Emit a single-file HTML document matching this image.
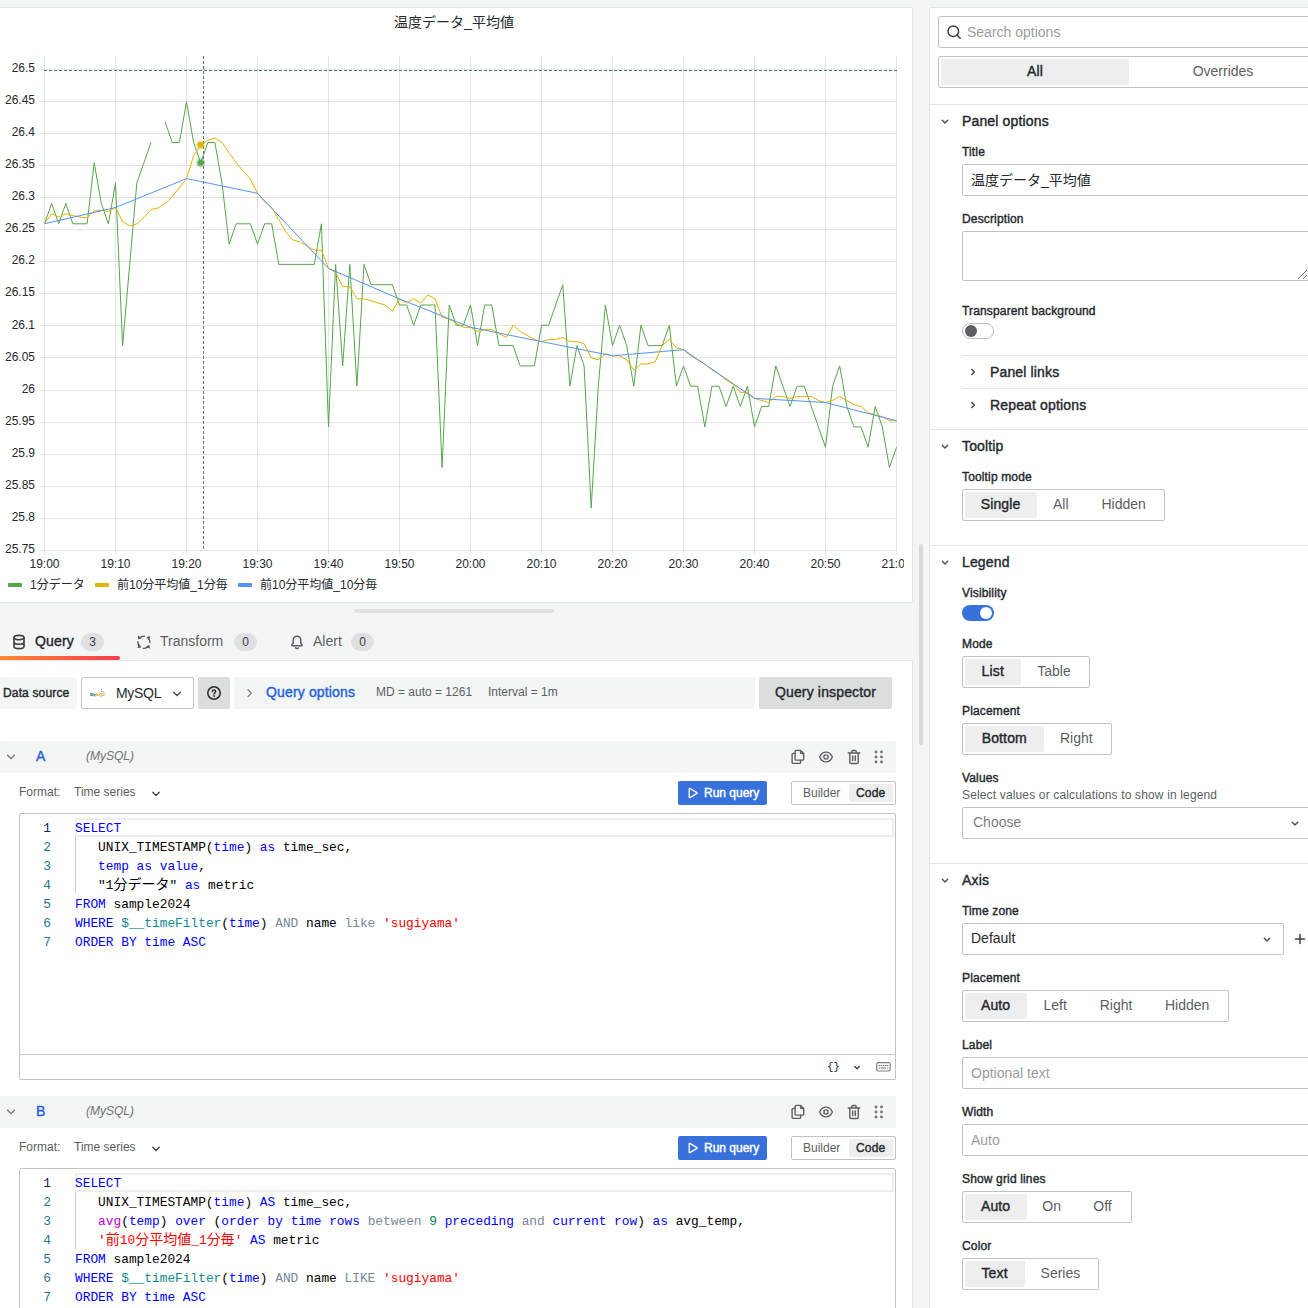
<!DOCTYPE html>
<html lang="ja"><head><meta charset="utf-8"><title>Edit panel</title>
<style>
*{box-sizing:border-box}
html,body{margin:0;padding:0}
body{width:1308px;height:1308px;overflow:hidden;position:relative;background:#f4f5f5;color:#24292e;
 font-family:"Liberation Sans","Noto Sans CJK JP",sans-serif;font-size:14px;line-height:1}
.abs{position:absolute}
.panel{position:absolute;background:#fff;border:1px solid #e4e5e6;border-radius:2px}
svg{display:block}
svg text{font-family:"Liberation Sans","Noto Sans CJK JP",sans-serif}
.t{position:absolute;white-space:nowrap;line-height:16px;height:16px}
.b5{font-weight:normal;-webkit-text-stroke:0.4px currentColor;letter-spacing:0.15px}
.ic{position:absolute;fill:none;stroke:#3b3f43;stroke-width:1.6;stroke-linecap:round;stroke-linejoin:round}
.badge{position:absolute;height:18px;border-radius:9px;background:#dfe0e1;color:#3b3f43;font-size:12px;line-height:18px;text-align:center}
.qh{position:absolute;left:0;width:896px;height:32px;background:#f4f5f5;border-radius:2px}
.code{position:absolute;font-family:"Liberation Mono","Noto Sans CJK JP",monospace;font-size:12.83px;line-height:19px;white-space:pre;color:#000}
.code .k{color:#0000ff}.code .s{color:#ff0000}.code .m{color:#0e8a8f}.code .o{color:#778899}.code .n{color:#098658}.code .f{color:#c700c7}
.ln{position:absolute;font-family:"Liberation Mono",monospace;font-size:12.83px;line-height:19px;white-space:pre;color:#237893;text-align:right;width:16px}
.h14{letter-spacing:-0.1px}
.cj{font-size:14px;line-height:19px}

</style></head>
<body>
<div class="panel" style="left:-2px;top:7px;width:915px;height:596px;overflow:hidden">
  <div class="t" style="left:1px;width:908px;top:6px;text-align:center;font-size:14px;">温度データ_平均値</div>
  <div class="abs" style="left:1px;top:0;width:904px;height:594px;overflow:hidden"><svg class="chart" width="912" height="594" viewBox="0 8 912 594">
<path d="M44.5 56.5 V555 M115.5 56.5 V555 M186.5 56.5 V555 M257.5 56.5 V555 M328.5 56.5 V555 M399.5 56.5 V555 M470.5 56.5 V555 M541.5 56.5 V555 M612.5 56.5 V555 M683.5 56.5 V555 M754.5 56.5 V555 M825.5 56.5 V555 M896.5 56.5 V555 M40 69.5 H896.5 M40 101.5 H896.5 M40 133.5 H896.5 M40 165.5 H896.5 M40 197.5 H896.5 M40 229.5 H896.5 M40 261.5 H896.5 M40 293.5 H896.5 M40 325.5 H896.5 M40 357.5 H896.5 M40 390.5 H896.5 M40 422.5 H896.5 M40 454.5 H896.5 M40 486.5 H896.5 M40 518.5 H896.5 M40 550.5 H896.5" stroke="#24292e" stroke-opacity="0.12" stroke-width="1" fill="none" shape-rendering="auto"/>
<g font-size="12" fill="#24292e" text-anchor="end">
<text x="35" y="71.9">26.5</text>
<text x="35" y="104">26.45</text>
<text x="35" y="136.1">26.4</text>
<text x="35" y="168.2">26.35</text>
<text x="35" y="200.2">26.3</text>
<text x="35" y="232.3">26.25</text>
<text x="35" y="264.4">26.2</text>
<text x="35" y="296.4">26.15</text>
<text x="35" y="328.5">26.1</text>
<text x="35" y="360.6">26.05</text>
<text x="35" y="392.6">26</text>
<text x="35" y="424.7">25.95</text>
<text x="35" y="456.8">25.9</text>
<text x="35" y="488.9">25.85</text>
<text x="35" y="520.9">25.8</text>
<text x="35" y="553">25.75</text>
</g>
<g font-size="12" fill="#24292e" text-anchor="middle">
<text x="44.5" y="568">19:00</text>
<text x="115.5" y="568">19:10</text>
<text x="186.5" y="568">19:20</text>
<text x="257.5" y="568">19:30</text>
<text x="328.5" y="568">19:40</text>
<text x="399.5" y="568">19:50</text>
<text x="470.5" y="568">20:00</text>
<text x="541.5" y="568">20:10</text>
<text x="612.5" y="568">20:20</text>
<text x="683.5" y="568">20:30</text>
<text x="754.5" y="568">20:40</text>
<text x="825.5" y="568">20:50</text>
<text x="896.5" y="568">21:00</text>
</g>
<path d="M44.5 223.8 L51.6 203.4 L58.7 223.8 L65.8 203.4 L72.9 223.8 L80 223.8 L87.1 223.8 L94.2 162.8 L101.3 203.4 L108.4 223.8 L115.5 183.1 L122.6 345.6 L129.7 264.4 L136.8 183.1 L143.9 162.8 L151 142.5 M165.2 122.2 L172.3 142.5 L179.4 142.5 L186.5 101.9 L193.6 142.5 L200.7 162.8 L207.8 142.5 L214.9 142.5 L222 183.1 L229.1 244.1 L236.2 223.8 L243.3 223.8 L250.4 223.8 L257.5 244.1 L264.6 223.8 L271.7 223.8 L278.8 264.4 L285.9 264.4 L293 264.4 L300.1 264.4 L307.2 264.4 L314.3 264.4 L321.4 223.8 L328.5 426.9 L335.6 264.4 L342.7 365.9 L349.8 264.4 L356.9 386.2 L364 264.4 L371.1 284.7 L378.2 284.7 L385.3 284.7 L392.4 284.7 L399.5 305 L406.6 305 L413.7 325.3 L420.8 305 L427.9 305 L435 305 L442.1 467.5 L449.2 305 L456.3 325.3 L463.4 325.3 L470.5 305 L477.6 345.6 L484.7 305 L491.8 305 L498.9 345.6 L506 345.6 L513.1 345.6 L520.2 365.9 L527.3 365.9 L534.4 365.9 L541.5 325.3 L548.6 325.3 L555.7 305 L562.8 284.7 L569.9 386.2 L577 345.6 L584.1 365.9 L591.2 508.1 L598.3 386.2 L605.4 305 L612.5 345.6 L619.6 325.3 L626.7 345.6 L633.8 386.2 L640.9 325.3 L648 345.6 L655.1 345.6 L662.2 345.6 L669.3 325.3 L676.4 386.2 L683.5 365.9 L690.6 386.2 L697.7 386.2 L704.8 426.9 L711.9 386.2 L719 386.2 L726.1 406.5 L733.2 386.2 L740.3 406.5 L747.4 386.2 L754.5 426.9 L761.6 406.5 L768.7 406.5 L775.8 365.9 L782.9 386.2 L790 406.5 L797.1 386.2 L804.2 386.2 L811.3 406.5 L818.4 426.9 L825.5 447.2 L832.6 386.2 L839.7 365.9 L846.8 406.5 L853.9 426.9 L861 426.9 L868.1 447.2 L875.2 406.5 L882.3 426.9 L889.4 467.5 L896.5 447.2" stroke="#56a64b" stroke-width="1" fill="none" stroke-linejoin="round"/>
<path d="M44.5 223.8 L51.6 213.6 L58.7 217 L65.8 213.6 L72.9 215.6 L80 217 L87.1 218 L94.2 211.1 L101.3 210.2 L108.4 211.6 L115.5 207.5 L122.6 221.7 L129.7 225.8 L136.8 223.8 L143.9 217.7 L151 209.5 L158.1 208 L165.2 203.4 L172.3 196.7 L179.4 187.7 L186.5 178.6 L193.6 156.1 L200.7 144.8 L207.8 140.3 L214.9 138 L222 142.5 L229.1 152.7 L236.2 162.8 L243.3 171 L250.4 179.1 L257.5 193.3 L264.6 201.4 L271.7 207.5 L278.8 219.7 L285.9 231.9 L293 240 L300.1 242 L307.2 246.1 L314.3 250.2 L321.4 250.2 L328.5 268.4 L335.6 272.5 L342.7 286.7 L349.8 286.7 L356.9 298.9 L364 298.9 L371.1 300.9 L378.2 303 L385.3 305 L392.4 311.1 L399.5 298.9 L406.6 303 L413.7 298.9 L420.8 303 L427.9 294.8 L435 298.9 L442.1 317.2 L449.2 319.2 L456.3 323.3 L463.4 327.3 L470.5 327.3 L477.6 331.4 L484.7 329.4 L491.8 329.4 L498.9 333.4 L506 337.5 L513.1 325.3 L520.2 331.4 L527.3 335.5 L534.4 339.5 L541.5 341.6 L548.6 339.5 L555.7 339.5 L562.8 337.5 L569.9 341.6 L577 341.6 L584.1 343.6 L591.2 357.8 L598.3 359.8 L605.4 353.7 L612.5 355.8 L619.6 355.8 L626.7 359.8 L633.8 370 L640.9 363.9 L648 363.9 L655.1 361.9 L662.2 345.6 L669.3 339.5 L676.4 347.7 L683.5 349.7 L690.6 355.8 L697.7 359.8 L704.8 363.9 L711.9 370 L719 374.1 L726.1 380.1 L733.2 384.2 L740.3 392.3 L747.4 392.3 L754.5 398.4 L761.6 400.5 L768.7 402.5 L775.8 396.4 L782.9 396.4 L790 398.4 L797.1 396.4 L804.2 396.4 L811.3 396.4 L818.4 400.5 L825.5 402.5 L832.6 400.5 L839.7 396.4 L846.8 400.5 L853.9 404.5 L861 406.5 L868.1 412.6 L875.2 414.7 L882.3 416.7 L889.4 420.8 L896.5 420.8" stroke="#e0b400" stroke-width="1" fill="none" stroke-linejoin="round"/>
<path d="M44.5 223.8 L115.5 207.5 L186.5 178.6 L257.5 193.3 L328.5 268.4 L399.5 298.9 L470.5 327.3 L541.5 341.6 L612.5 355.8 L683.5 349.7 L754.5 398.4 L825.5 402.5 L896.5 420.8" stroke="#5794f2" stroke-width="1" fill="none" stroke-linejoin="round"/>
<path d="M203.5 56 V551" stroke="#587589" stroke-width="1" stroke-dasharray="3 2" fill="none" shape-rendering="crispEdges"/>
<path d="M43.9 70.5 H896.5" stroke="#587589" stroke-width="1" stroke-dasharray="3 2" fill="none" shape-rendering="crispEdges"/>
<circle cx="200.6" cy="144.8" r="4.5" fill="#e0b400" fill-opacity="0.45"/><circle cx="200.6" cy="144.8" r="2.8" fill="#e0b400"/>
<circle cx="200.6" cy="162.8" r="4.5" fill="#56a64b" fill-opacity="0.45"/><circle cx="200.6" cy="162.8" r="2.8" fill="#56a64b"/>
</svg></div>
  <div class="abs" style="left:9px;top:574.5px;width:14px;height:4px;background:#56a64b;border-radius:1px"></div>
  <div class="t" style="left:31px;top:568.5px;font-size:12px">1分データ</div>
  <div class="abs" style="left:96px;top:574.5px;width:14px;height:4px;background:#e0b400;border-radius:1px"></div>
  <div class="t" style="left:118px;top:568.5px;font-size:12px">前10分平均値_1分毎</div>
  <div class="abs" style="left:239px;top:574.5px;width:14px;height:4px;background:#5794f2;border-radius:1px"></div>
  <div class="t" style="left:261px;top:568.5px;font-size:12px">前10分平均値_10分毎</div>
</div>
<!-- splitter handle -->
<div class="abs" style="left:354px;top:609px;width:200px;height:4px;border-radius:2px;background:#dfe0e1"></div>
<div class="abs" style="left:919px;top:544px;width:4px;height:201px;border-radius:2px;background:#d8d9db"></div>

<!-- tabs -->
<div class="abs" style="z-index:2;left:0;top:656px;width:120px;height:4px;border-radius:0 2px 2px 0;background:linear-gradient(90deg,#ff8833 0%,#f53e4c 100%)"></div>
<svg class="ic" style="left:12px;top:634px" width="14" height="16" viewBox="0 0 14 16"><ellipse cx="7" cy="3.6" rx="5" ry="2.2"/><path d="M2 3.6v8.8c0 1.2 2.2 2.2 5 2.2s5-1 5-2.2V3.6M2 8c0 1.2 2.2 2.2 5 2.2s5-1 5-2.2"/></svg>
<div class="t b5" style="left:35px;top:633px;font-size:14px">Query</div>
<div class="badge" style="left:81px;top:633px;width:23px">3</div>
<svg class="abs" style="left:137px;top:634.500px" width="14" height="15" viewBox="0 0 14 15" fill="#4f5358" stroke="#4f5358" stroke-width="1.300" stroke-linecap="round"><path d="M0.900 0.600L1.300 4.400 5 2.900z" stroke="none"/><path d="M3.500 2.300Q5.500 1.200 7.500 1.100" fill="none"/><path d="M13.600 1.300L9.700 1.900 11.400 5.300z" stroke="none"/><path d="M11.800 3.500Q12.900 5.500 12.900 7.600" fill="none"/><path d="M12.900 13.800L12.500 10 8.900 11.600z" stroke="none"/><path d="M10.500 12.200Q8.500 13.300 6.200 13.300" fill="none"/><path d="M0.300 13L4.100 12.500 2.500 9z" stroke="none"/><path d="M2 10.800Q0.800 8.800 0.800 6.600" fill="none"/></svg>
<div class="t" style="left:160px;top:633px;font-size:14px;color:#5b5f63">Transform</div>
<div class="badge" style="left:234px;top:633px;width:23px">0</div>
<svg class="ic" style="left:290px;top:634px;stroke:#5b5f63;stroke-width:1.5" width="14" height="16" viewBox="0 0 14 16"><path d="M7 2.2c-2.200 0-3.800 1.700-3.800 3.800v3.200L2 10.800v.9h10v-.9l-1.200-1.600V6c0-2.100-1.600-3.800-3.800-3.800zM5.600 13.800c.3.500.8.800 1.400.800s1.100-.3 1.400-.8"/></svg>
<div class="t" style="left:313px;top:633px;font-size:14px;color:#5b5f63">Alert</div>
<div class="badge" style="left:351px;top:633px;width:23px">0</div>

<!-- query panel -->
<div class="panel" style="left:-2px;top:660px;width:915px;height:660px"></div>
<div class="abs" style="left:0;top:677px;width:77px;height:32px;background:#f4f5f5;border-radius:2px"></div>
<div class="t b5" style="left:3px;top:685px;font-size:12px">Data source</div>
<div class="abs" style="left:81px;top:677px;width:113px;height:32px;border:1px solid #c0c2c4;border-radius:2px;background:#fff"></div>
<svg class="abs" style="left:89px;top:686px" width="18" height="14" viewBox="0 0 18 14"><text x="0.900" y="9.900" font-size="4.300" font-weight="bold" letter-spacing="0.100" fill="#00618a">My<tspan fill="#e48e00">SQL</tspan></text><circle cx="12.500" cy="3.200" r=".5" fill="#00618a"/><circle cx="12.800" cy="5.200" r=".5" fill="#00618a"/><circle cx="14.300" cy="5.800" r=".55" fill="#e48e00"/><circle cx="15.800" cy="7.300" r=".55" fill="#e48e00"/></svg>
<div class="t" style="left:116px;top:685px;font-size:14px;letter-spacing:-0.3px">MySQL</div>
<svg class="ic" style="left:172px;top:690px;stroke-width:1.400;stroke:#4f5358" width="10" height="8" viewBox="0 0 10 8"><path d="M1.600 2.200l3.400 3.400 3.400-3.400"/></svg>
<div class="abs" style="left:198px;top:677px;width:32px;height:32px;background:#dcdddd;border-radius:2px"></div>
<svg class="ic" style="left:206px;top:685px;stroke-width:1.500;stroke:#24292e" width="16" height="16" viewBox="0 0 16 16"><circle cx="8" cy="8" r="6.200"/><path d="M6.300 6.500c0-1 .7-1.600 1.700-1.600s1.700.6 1.700 1.500c0 1.300-1.700 1.300-1.700 2.600" stroke-width="1.400"/><circle cx="8" cy="11" r=".5" fill="#24292e" stroke-width=".7"/></svg>
<div class="abs" style="left:234px;top:677px;width:521px;height:32px;background:#f4f5f5;border-radius:2px"></div>
<svg class="ic" style="left:246px;top:688px;stroke:#7b7e82;stroke-width:1.300" width="8" height="10" viewBox="0 0 8 10"><path d="M2 1.800l3.300 3.400L2 8.600"/></svg>
<div class="t b5" style="left:266px;top:684px;font-size:14px;color:#1f62e0">Query options</div>
<div class="t" style="left:376px;top:684px;font-size:12px;color:#5b5f63">MD = auto = 1261</div>
<div class="t" style="left:488px;top:684px;font-size:12px;color:#5b5f63">Interval = 1m</div>
<div class="abs" style="left:759px;top:677px;width:133px;height:32px;background:#dcdddd;border-radius:2px"></div>
<div class="t b5" style="left:759px;width:133px;text-align:center;top:684px;font-size:14px">Query inspector</div>
<div class="qh" style="top:741px"></div>
<svg class="ic" style="left:6px;top:753px;stroke:#6e7278;stroke-width:1.300" width="10" height="8" viewBox="0 0 10 8"><path d="M1.600 2.200l3.400 3.400 3.400-3.400"/></svg>
<div class="t b5" style="left:36px;top:748px;font-size:14px;color:#1f62e0">A</div>
<div class="t" style="left:86px;top:748px;font-size:12px;font-style:italic;color:#6e7278">(MySQL)</div>
<svg class="ic" style="left:791px;top:749px;stroke-width:1.400;stroke:#5b5f63" width="14" height="16" viewBox="0 0 14 16"><path d="M5.300 1.400h4.300l3.100 3.100v5.400c0 .7-.5 1.200-1.200 1.200H5.300c-.7 0-1.200-.5-1.200-1.200V2.600c0-.7.500-1.200 1.200-1.200zM9.500 1.600v1.900c0 .6.500 1.100 1.100 1.100h1.900"/><path d="M4.100 4.400H2.300c-.7 0-1.200.5-1.200 1.200v7.600c0 .7.500 1.200 1.200 1.200h6.100c.7 0 1.200-.5 1.200-1.200v-2"/></svg>
<svg class="ic" style="left:818px;top:750px;stroke-width:1.400;stroke:#5b5f63" width="16" height="14" viewBox="0 0 16 14"><path d="M1.600 7c1.400-3.100 3.700-4.900 6.400-4.900s5 1.800 6.400 4.900c-1.400 3.100-3.700 4.900-6.400 4.900S3 10.100 1.600 7z"/><circle cx="8" cy="7" r="2.100"/></svg>
<svg class="ic" style="left:847px;top:749px;stroke-width:1.400;stroke:#5b5f63" width="14" height="16" viewBox="0 0 14 16"><path d="M1.200 4h11.600M4.800 4V2.600c0-.6.500-1.100 1.100-1.100h2.200c.6 0 1.100.5 1.100 1.100V4M2.800 4v9.200c0 .7.600 1.300 1.300 1.300h5.800c.7 0 1.300-.6 1.300-1.300V4M5.700 7v4.500M8.300 7v4.500"/></svg>
<svg class="abs" style="left:874px;top:750px" width="10" height="14" viewBox="0 0 10 14" fill="#73777c"><circle cx="2" cy="2" r="1.450"/><circle cx="7.500" cy="2" r="1.450"/><circle cx="2" cy="7" r="1.450"/><circle cx="7.500" cy="7" r="1.450"/><circle cx="2" cy="12" r="1.450"/><circle cx="7.500" cy="12" r="1.450"/></svg>
<div class="t" style="left:19px;top:784px;font-size:12px;color:#5b5f63">Format:</div>
<div class="t" style="left:74px;top:784px;font-size:12px;color:#5b5f63">Time series</div>
<svg class="ic" style="left:151px;top:790px;stroke-width:1.300" width="10" height="8" viewBox="0 0 10 8"><path d="M1.800 2.300l3.200 3.200 3.200-3.200"/></svg>
<div class="abs" style="left:678px;top:781px;width:89px;height:24px;background:#3871dc;border-radius:2px"></div>
<svg class="ic" style="left:687px;top:787px;stroke:#fff;stroke-width:1.300" width="12" height="12" viewBox="0 0 12 12"><path d="M2.200 1.800v8.400c0 .4.400.6.700.4l7-4.200c.3-.2.300-.6 0-.8l-7-4.200c-.3-.2-.7 0-.7.400z"/></svg>
<div class="t b5" style="left:704px;top:785px;font-size:12px;letter-spacing:0;color:#fff">Run query</div>
<div class="abs" style="left:791px;top:781px;width:105px;height:24px;border:1px solid #c0c2c4;border-radius:2px;background:#fff"></div>
<div class="abs" style="left:849px;top:784px;width:44px;height:18px;background:#eeeeee;border-radius:2px"></div>
<div class="t" style="left:803px;top:785px;font-size:12px;color:#5b5f63">Builder</div>
<div class="t b5" style="left:856px;top:785px;font-size:12px">Code</div>
<div class="abs" style="left:19px;top:813px;width:877px;height:242px;border:1px solid #c0c2c4;border-radius:2px 2px 0 0;background:#fff"></div>
<div class="abs" style="left:75px;top:818px;width:819px;height:19px;border:2px solid #eeeeee"></div>
<div class="abs" style="left:75px;top:837px;width:1px;height:57px;background:#d3d3d3"></div>
<div class="ln" style="left:35px;top:818.6px;color:#0b216f;">1</div>
<div class="code" style="left:75px;top:818.6px"><span class="k">SELECT</span></div>
<div class="ln" style="left:35px;top:837.6px;">2</div>
<div class="code" style="left:75px;top:837.6px">   UNIX_TIMESTAMP(<span class="k">time</span>) <span class="k">as</span> time_sec,</div>
<div class="ln" style="left:35px;top:856.6px;">3</div>
<div class="code" style="left:75px;top:856.6px">   <span class="k">temp</span> <span class="k">as</span> <span class="k">value</span>,</div>
<div class="ln" style="left:35px;top:875.6px;">4</div>
<div class="code" style="left:75px;top:875.6px">   "1<span class="cj">分データ</span>" <span class="k">as</span> metric</div>
<div class="ln" style="left:35px;top:894.6px;">5</div>
<div class="code" style="left:75px;top:894.6px"><span class="k">FROM</span> sample2024</div>
<div class="ln" style="left:35px;top:913.6px;">6</div>
<div class="code" style="left:75px;top:913.6px"><span class="k">WHERE</span> <span class="m">$__timeFilter</span>(<span class="k">time</span>) <span class="o">AND</span> name <span class="o">like</span> <span class="s">'sugiyama'</span></div>
<div class="ln" style="left:35px;top:932.6px;">7</div>
<div class="code" style="left:75px;top:932.6px"><span class="k">ORDER</span> <span class="k">BY</span> <span class="k">time</span> <span class="k">ASC</span></div>
<div class="abs" style="left:19px;top:1055px;width:877px;height:25px;border:1px solid #c0c2c4;border-top:none;border-radius:0 0 2px 2px;background:#fff"></div>
<div class="t" style="left:827px;top:1059px;font-size:11px;font-family:'Liberation Mono',monospace;letter-spacing:-0.3px;color:#24292e">{}</div>
<svg class="ic" style="left:853px;top:1064.5px;stroke-width:1.300" width="8" height="6" viewBox="0 0 8 6"><path d="M1.700 1.500l2.300 2.300 2.300-2.300"/></svg>
<svg class="ic" style="left:875.500px;top:1062.2px;stroke-width:1.200;stroke:#7b7e82" width="15" height="10" viewBox="0 0 15 10"><rect x=".7" y=".7" width="13.400" height="8.300" rx="1.500"/><path d="M3 3.500h.7M5.200 3.500h.7M7.400 3.500h.7M9.600 3.500h.7M11.400 3.500h.5M3 6h.6M5 6h4.600M11.300 6h.6" stroke-width="0.900" stroke="#5b5f63"/></svg>
<div class="qh" style="top:1096px"></div>
<svg class="ic" style="left:6px;top:1108px;stroke:#6e7278;stroke-width:1.300" width="10" height="8" viewBox="0 0 10 8"><path d="M1.600 2.200l3.400 3.400 3.400-3.400"/></svg>
<div class="t b5" style="left:36px;top:1103px;font-size:14px;color:#1f62e0">B</div>
<div class="t" style="left:86px;top:1103px;font-size:12px;font-style:italic;color:#6e7278">(MySQL)</div>
<svg class="ic" style="left:791px;top:1104px;stroke-width:1.400;stroke:#5b5f63" width="14" height="16" viewBox="0 0 14 16"><path d="M5.300 1.400h4.300l3.100 3.100v5.400c0 .7-.5 1.200-1.200 1.200H5.300c-.7 0-1.200-.5-1.200-1.200V2.600c0-.7.500-1.200 1.200-1.200zM9.500 1.600v1.900c0 .6.500 1.100 1.100 1.100h1.900"/><path d="M4.100 4.400H2.300c-.7 0-1.200.5-1.200 1.200v7.600c0 .7.500 1.200 1.200 1.200h6.100c.7 0 1.200-.5 1.200-1.200v-2"/></svg>
<svg class="ic" style="left:818px;top:1105px;stroke-width:1.400;stroke:#5b5f63" width="16" height="14" viewBox="0 0 16 14"><path d="M1.600 7c1.400-3.100 3.700-4.900 6.400-4.900s5 1.800 6.400 4.900c-1.400 3.100-3.700 4.900-6.400 4.900S3 10.100 1.600 7z"/><circle cx="8" cy="7" r="2.100"/></svg>
<svg class="ic" style="left:847px;top:1104px;stroke-width:1.400;stroke:#5b5f63" width="14" height="16" viewBox="0 0 14 16"><path d="M1.200 4h11.600M4.800 4V2.600c0-.6.500-1.100 1.100-1.100h2.200c.6 0 1.100.5 1.100 1.100V4M2.800 4v9.200c0 .7.600 1.300 1.300 1.300h5.800c.7 0 1.300-.6 1.300-1.300V4M5.700 7v4.500M8.300 7v4.500"/></svg>
<svg class="abs" style="left:874px;top:1105px" width="10" height="14" viewBox="0 0 10 14" fill="#73777c"><circle cx="2" cy="2" r="1.450"/><circle cx="7.500" cy="2" r="1.450"/><circle cx="2" cy="7" r="1.450"/><circle cx="7.500" cy="7" r="1.450"/><circle cx="2" cy="12" r="1.450"/><circle cx="7.500" cy="12" r="1.450"/></svg>
<div class="t" style="left:19px;top:1139px;font-size:12px;color:#5b5f63">Format:</div>
<div class="t" style="left:74px;top:1139px;font-size:12px;color:#5b5f63">Time series</div>
<svg class="ic" style="left:151px;top:1145px;stroke-width:1.300" width="10" height="8" viewBox="0 0 10 8"><path d="M1.800 2.300l3.200 3.200 3.200-3.200"/></svg>
<div class="abs" style="left:678px;top:1136px;width:89px;height:24px;background:#3871dc;border-radius:2px"></div>
<svg class="ic" style="left:687px;top:1142px;stroke:#fff;stroke-width:1.300" width="12" height="12" viewBox="0 0 12 12"><path d="M2.200 1.800v8.400c0 .4.400.6.700.4l7-4.200c.3-.2.300-.6 0-.8l-7-4.200c-.3-.2-.7 0-.7.400z"/></svg>
<div class="t b5" style="left:704px;top:1140px;font-size:12px;letter-spacing:0;color:#fff">Run query</div>
<div class="abs" style="left:791px;top:1136px;width:105px;height:24px;border:1px solid #c0c2c4;border-radius:2px;background:#fff"></div>
<div class="abs" style="left:849px;top:1139px;width:44px;height:18px;background:#eeeeee;border-radius:2px"></div>
<div class="t" style="left:803px;top:1140px;font-size:12px;color:#5b5f63">Builder</div>
<div class="t b5" style="left:856px;top:1140px;font-size:12px">Code</div>
<div class="abs" style="left:19px;top:1168px;width:877px;height:400px;border:1px solid #c0c2c4;border-radius:2px 2px 0 0;background:#fff"></div>
<div class="abs" style="left:75px;top:1173px;width:819px;height:19px;border:2px solid #eeeeee"></div>
<div class="abs" style="left:75px;top:1192px;width:1px;height:57px;background:#d3d3d3"></div>
<div class="ln" style="left:35px;top:1173.6px;color:#0b216f;">1</div>
<div class="code" style="left:75px;top:1173.6px"><span class="k">SELECT</span></div>
<div class="ln" style="left:35px;top:1192.6px;">2</div>
<div class="code" style="left:75px;top:1192.6px">   UNIX_TIMESTAMP(<span class="k">time</span>) <span class="k">AS</span> time_sec,</div>
<div class="ln" style="left:35px;top:1211.6px;">3</div>
<div class="code" style="left:75px;top:1211.6px">   <span class="f">avg</span>(<span class="k">temp</span>) <span class="k">over</span> (<span class="k">order</span> <span class="k">by</span> <span class="k">time</span> <span class="k">rows</span> <span class="o">between</span> <span class="n">9</span> <span class="k">preceding</span> <span class="o">and</span> <span class="k">current</span> <span class="k">row</span>) <span class="k">as</span> avg_temp,</div>
<div class="ln" style="left:35px;top:1230.6px;">4</div>
<div class="code" style="left:75px;top:1230.6px">   <span class="s">'<span class="cj">前</span>10<span class="cj">分平均値</span>_1<span class="cj">分毎</span>'</span> <span class="k">AS</span> metric</div>
<div class="ln" style="left:35px;top:1249.6px;">5</div>
<div class="code" style="left:75px;top:1249.6px"><span class="k">FROM</span> sample2024</div>
<div class="ln" style="left:35px;top:1268.6px;">6</div>
<div class="code" style="left:75px;top:1268.6px"><span class="k">WHERE</span> <span class="m">$__timeFilter</span>(<span class="k">time</span>) <span class="o">AND</span> name <span class="o">LIKE</span> <span class="s">'sugiyama'</span></div>
<div class="ln" style="left:35px;top:1287.6px;">7</div>
<div class="code" style="left:75px;top:1287.6px"><span class="k">ORDER</span> <span class="k">BY</span> <span class="k">time</span> <span class="k">ASC</span></div>

<div class="panel" style="left:929px;top:7px;width:400px;height:1320px"></div>
<div class="abs" style="left:938px;top:16px;width:400px;height:32px;border:1px solid #c0c2c4;border-radius:2px;background:#fff"></div>
<svg class="ic" style="left:946px;top:24px;stroke-width:1.500;stroke:#3b3f43" width="16" height="16" viewBox="0 0 16 16"><circle cx="7.300" cy="7.300" r="5.300"/><path d="M11.200 11.200l3 3"/></svg>
<div class="t" style="left:967px;top:24px;font-size:14px;color:#9b9da0">Search options</div>
<div class="abs" style="left:938px;top:56px;width:400px;height:32px;border:1px solid #c0c2c4;border-radius:2px;background:#fff"></div>
<div class="abs" style="left:941px;top:59px;width:188px;height:26px;background:#eeeeee;border-radius:2px"></div>
<div class="t b5" style="left:985px;width:100px;text-align:center;top:63px;font-size:14px">All</div>
<div class="t" style="left:1173px;width:100px;text-align:center;top:63px;font-size:14px;color:#5b5f63">Overrides</div>
<div class="abs" style="left:930px;top:104px;width:400px;height:1px;background:#e4e5e6"></div>
<svg class="ic" style="left:940px;top:117px;stroke-width:1.400;stroke:#4a4e53" width="10" height="9" viewBox="0 0 10 9"><path d="M2.300 3.300l2.700 2.700 2.700-2.700"/></svg><div class="t b5" style="left:962px;top:113px;font-size:14px">Panel options</div>
<div class="t b5" style="left:962px;top:144px;font-size:12px">Title</div>
<div class="abs" style="left:962px;top:164px;width:400px;height:32px;border:1px solid #c0c2c4;border-radius:2px;background:#fff"></div>
<div class="t" style="left:971px;top:171.500px;font-size:14px">温度データ_平均値</div>
<div class="t b5" style="left:962px;top:211px;font-size:12px">Description</div>
<div class="abs" style="left:962px;top:231px;width:400px;height:50px;border:1px solid #c0c2c4;border-radius:2px;background:#fff"></div>
<svg class="abs" style="left:1296px;top:268px" width="12" height="12" viewBox="0 0 12 12"><path d="M2 11L11 2M7 11l4-4" stroke="#6e7278" stroke-width="1"/></svg>
<div class="t b5" style="left:962px;top:303px;font-size:12px">Transparent background</div>
<div class="abs" style="left:962px;top:323px;width:32px;height:16px;border:1px solid #bdbfc0;border-radius:8px;background:#fff"></div>
<div class="abs" style="left:965px;top:325px;width:12px;height:12px;border-radius:6px;background:#5b5e62"></div>
<div class="abs" style="left:962px;top:355px;width:400px;height:1px;background:#e4e5e6"></div>
<svg class="ic" style="left:969px;top:367px;stroke-width:1.400" width="8" height="10" viewBox="0 0 8 10"><path d="M2.800 2.500l2.600 2.500-2.600 2.500"/></svg>
<div class="t b5" style="left:990px;top:364px;font-size:14px">Panel links</div>
<div class="abs" style="left:962px;top:388px;width:400px;height:1px;background:#e4e5e6"></div>
<svg class="ic" style="left:969px;top:400px;stroke-width:1.400" width="8" height="10" viewBox="0 0 8 10"><path d="M2.800 2.500l2.600 2.500-2.600 2.500"/></svg>
<div class="t b5" style="left:990px;top:397px;font-size:14px">Repeat options</div>
<div class="abs" style="left:930px;top:429px;width:400px;height:1px;background:#e4e5e6"></div>
<svg class="ic" style="left:940px;top:442px;stroke-width:1.400;stroke:#4a4e53" width="10" height="9" viewBox="0 0 10 9"><path d="M2.300 3.300l2.700 2.700 2.700-2.700"/></svg><div class="t b5" style="left:962px;top:438px;font-size:14px">Tooltip</div>
<div class="t b5" style="left:962px;top:469px;font-size:12px">Tooltip mode</div>
<div class="abs" style="left:962px;top:489px;width:203px;height:32px;border:1px solid #c0c2c4;border-radius:2px;background:#fff"></div>
<div class="abs" style="left:965px;top:492px;width:72px;height:26px;background:#eeeeee;border-radius:2px"></div>
<div class="t b5" style="left:950.6px;width:100px;text-align:center;top:496px;font-size:14px;">Single</div>
<div class="t" style="left:1010.8px;width:100px;text-align:center;top:496px;font-size:14px;color:#5b5f63">All</div>
<div class="t" style="left:1073.7px;width:100px;text-align:center;top:496px;font-size:14px;color:#5b5f63">Hidden</div>
<div class="abs" style="left:930px;top:545px;width:400px;height:1px;background:#e4e5e6"></div>
<svg class="ic" style="left:940px;top:558px;stroke-width:1.400;stroke:#4a4e53" width="10" height="9" viewBox="0 0 10 9"><path d="M2.300 3.300l2.700 2.700 2.700-2.700"/></svg><div class="t b5" style="left:962px;top:554px;font-size:14px">Legend</div>
<div class="t b5" style="left:962px;top:585px;font-size:12px">Visibility</div>
<div class="abs" style="left:962px;top:605px;width:32px;height:16px;border-radius:8px;background:#3871dc"></div>
<div class="abs" style="left:980px;top:607px;width:12px;height:12px;border-radius:6px;background:#fff"></div>
<div class="t b5" style="left:962px;top:636px;font-size:12px">Mode</div>
<div class="abs" style="left:962px;top:656px;width:128px;height:32px;border:1px solid #c0c2c4;border-radius:2px;background:#fff"></div>
<div class="abs" style="left:965px;top:659px;width:56px;height:26px;background:#eeeeee;border-radius:2px"></div>
<div class="t b5" style="left:942.8px;width:100px;text-align:center;top:663px;font-size:14px;">List</div>
<div class="t" style="left:1004px;width:100px;text-align:center;top:663px;font-size:14px;color:#5b5f63">Table</div>
<div class="t b5" style="left:962px;top:703px;font-size:12px">Placement</div>
<div class="abs" style="left:962px;top:723px;width:150px;height:32px;border:1px solid #c0c2c4;border-radius:2px;background:#fff"></div>
<div class="abs" style="left:965px;top:726px;width:79px;height:26px;background:#eeeeee;border-radius:2px"></div>
<div class="t b5" style="left:954.3px;width:100px;text-align:center;top:730px;font-size:14px;">Bottom</div>
<div class="t" style="left:1026.3px;width:100px;text-align:center;top:730px;font-size:14px;color:#5b5f63">Right</div>
<div class="t b5" style="left:962px;top:770px;font-size:12px">Values</div>
<div class="t" style="left:962px;top:787px;font-size:12px;letter-spacing:0.15px;color:#5b5f63">Select values or calculations to show in legend</div>
<div class="abs" style="left:962px;top:807px;width:400px;height:32px;border:1px solid #c0c2c4;border-radius:2px;background:#fff"></div>
<div class="t" style="left:973px;top:814px;font-size:14px;color:#7b7e82">Choose</div>
<svg class="ic" style="left:1290px;top:819px;stroke-width:1.400;stroke:#4a4e53" width="10" height="9" viewBox="0 0 10 9"><path d="M2.300 3.300l2.700 2.700 2.700-2.700"/></svg>
<div class="abs" style="left:930px;top:863px;width:400px;height:1px;background:#e4e5e6"></div>
<svg class="ic" style="left:940px;top:876px;stroke-width:1.400;stroke:#4a4e53" width="10" height="9" viewBox="0 0 10 9"><path d="M2.300 3.300l2.700 2.700 2.700-2.700"/></svg><div class="t b5" style="left:962px;top:872px;font-size:14px">Axis</div>
<div class="t b5" style="left:962px;top:903px;font-size:12px">Time zone</div>
<div class="abs" style="left:962px;top:923px;width:322px;height:32px;border:1px solid #c0c2c4;border-radius:2px;background:#fff"></div>
<div class="t" style="left:971px;top:930px;font-size:14px">Default</div>
<svg class="ic" style="left:1262px;top:935px;stroke-width:1.400;stroke:#4a4e53" width="10" height="9" viewBox="0 0 10 9"><path d="M2.300 3.300l2.700 2.700 2.700-2.700"/></svg>
<svg class="ic" style="left:1294px;top:933px;stroke-width:1.500" width="12" height="12" viewBox="0 0 12 12"><path d="M6 1.500v9M1.500 6h9"/></svg>
<div class="t b5" style="left:962px;top:970px;font-size:12px">Placement</div>
<div class="abs" style="left:962px;top:990px;width:267px;height:32px;border:1px solid #c0c2c4;border-radius:2px;background:#fff"></div>
<div class="abs" style="left:965px;top:993px;width:62px;height:26px;background:#eeeeee;border-radius:2px"></div>
<div class="t b5" style="left:945.6px;width:100px;text-align:center;top:997px;font-size:14px;">Auto</div>
<div class="t" style="left:1005.2px;width:100px;text-align:center;top:997px;font-size:14px;color:#5b5f63">Left</div>
<div class="t" style="left:1066.1px;width:100px;text-align:center;top:997px;font-size:14px;color:#5b5f63">Right</div>
<div class="t" style="left:1137.2px;width:100px;text-align:center;top:997px;font-size:14px;color:#5b5f63">Hidden</div>
<div class="t b5" style="left:962px;top:1037px;font-size:12px">Label</div>
<div class="abs" style="left:962px;top:1057px;width:400px;height:32px;border:1px solid #c0c2c4;border-radius:2px;background:#fff"></div>
<div class="t" style="left:971px;top:1065px;font-size:14px;color:#9b9da0">Optional text</div>
<div class="t b5" style="left:962px;top:1104px;font-size:12px">Width</div>
<div class="abs" style="left:962px;top:1124px;width:400px;height:32px;border:1px solid #c0c2c4;border-radius:2px;background:#fff"></div>
<div class="t" style="left:971px;top:1132px;font-size:14px;color:#9b9da0">Auto</div>
<div class="t b5" style="left:962px;top:1171px;font-size:12px">Show grid lines</div>
<div class="abs" style="left:962px;top:1191px;width:170px;height:32px;border:1px solid #c0c2c4;border-radius:2px;background:#fff"></div>
<div class="abs" style="left:965px;top:1194px;width:62px;height:26px;background:#eeeeee;border-radius:2px"></div>
<div class="t b5" style="left:945.6px;width:100px;text-align:center;top:1198px;font-size:14px;">Auto</div>
<div class="t" style="left:1001.7px;width:100px;text-align:center;top:1198px;font-size:14px;color:#5b5f63">On</div>
<div class="t" style="left:1052.5px;width:100px;text-align:center;top:1198px;font-size:14px;color:#5b5f63">Off</div>
<div class="t b5" style="left:962px;top:1238px;font-size:12px">Color</div>
<div class="abs" style="left:962px;top:1258px;width:137px;height:32px;border:1px solid #c0c2c4;border-radius:2px;background:#fff"></div>
<div class="abs" style="left:965px;top:1261px;width:60px;height:26px;background:#eeeeee;border-radius:2px"></div>
<div class="t b5" style="left:944.6px;width:100px;text-align:center;top:1265px;font-size:14px;">Text</div>
<div class="t" style="left:1010.4000000000001px;width:100px;text-align:center;top:1265px;font-size:14px;color:#5b5f63">Series</div>
</body></html>
